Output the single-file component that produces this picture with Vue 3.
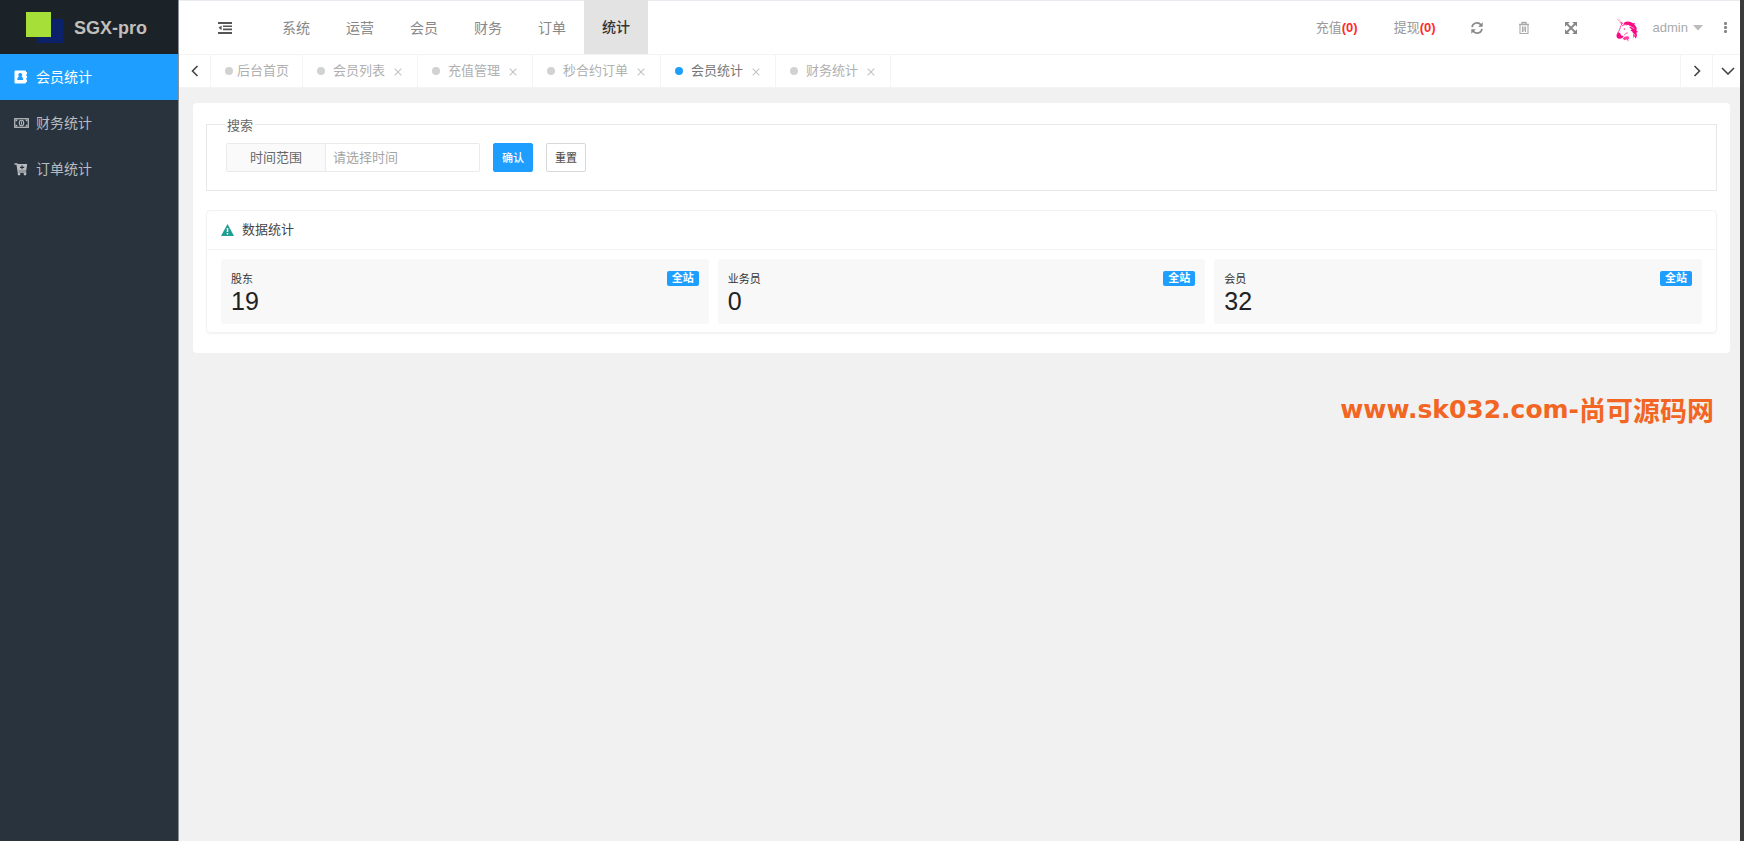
<script setup>
import { ref } from 'vue'

const sideItems = [
  { label: '会员统计', icon: 'user', active: true },
  { label: '财务统计', icon: 'money', active: false },
  { label: '订单统计', icon: 'cart', active: false },
]
const navItems = ['系统', '运营', '会员', '财务', '订单', '统计']
const activeNav = ref('统计')
const tabs = ['后台首页', '会员列表', '充值管理', '秒合约订单', '会员统计', '财务统计']
const activeTab = ref('会员统计')
const stats = [
  { label: '股东', value: 19 },
  { label: '业务员', value: 0 },
  { label: '会员', value: 32 },
]
const range = ref('')
</script>

<template>
  <div class="app">
    <aside class="side">
      <div class="logo">
        <svg class="logo-mark" width="38" height="32" viewBox="0 0 38 32" aria-hidden="true">
          <rect x="12" y="7" width="25" height="24" fill="#0b226b" />
          <rect x="0" y="0" width="25" height="25" fill="#a5df37" />
        </svg>
        <span>SGX-pro</span>
      </div>
      <nav>
        <a v-for="s in sideItems" :key="s.label" href="#" class="side-item" :class="{ active: s.active }">
          <svg v-if="s.icon === 'user'" width="15" height="14" viewBox="0 0 15 14" aria-hidden="true">
            <path fill="currentColor" fill-rule="evenodd" d="M1.500.5h9.500a1 1 0 0 1 1 1v11a1 1 0 0 1-1 1H1.500a1 1 0 0 1-1-1v-11a1 1 0 0 1 1-1zM6.200 3a1.900 1.900 0 0 0-1.200 3.400C3.800 7 3.300 8.300 3.300 10h5.900c0-1.700-.5-3-1.700-3.600A1.900 1.900 0 0 0 6.200 3z" />
            <path fill="currentColor" d="M12 2h1v2.500h-1zM12 5.800h1v2.500h-1zM12 9.500h1V12h-1z" />
          </svg>
          <svg v-else-if="s.icon === 'money'" width="15" height="14" viewBox="0 0 15 14" aria-hidden="true">
            <rect x="0.700" y="2.700" width="13.600" height="8.600" fill="none" stroke="currentColor" stroke-width="1.200" />
            <path fill="currentColor" d="M1.500 3.500h2.200a2.200 2.200 0 0 1-2.200 2zM13.500 3.500h-2.200a2.200 2.200 0 0 0 2.200 2zM1.500 10.500h2.200a2.200 2.200 0 0 0-2.200-2zM13.500 10.500h-2.200a2.200 2.200 0 0 1 2.200-2z" />
            <ellipse cx="7.500" cy="7" rx="2.200" ry="2.800" fill="none" stroke="currentColor" stroke-width="1.100" />
            <path d="M7.500 5.500v3" stroke="currentColor" />
          </svg>
          <svg v-else width="15" height="14" viewBox="0 0 15 14" aria-hidden="true">
            <path d="M.5 2h2.500l1.300 8h7.900" fill="none" stroke="currentColor" stroke-width="1.300" />
            <path fill="currentColor" fill-rule="evenodd" d="M3 2h10.200l-1 6.800H4.300zM7.500 3.300v1.500H6v1.100h1.500v1.400h1.100V5.900h1.600V4.800H8.600V3.300z" />
            <circle cx="5" cy="12" r="1.400" fill="currentColor" />
            <circle cx="11" cy="12" r="1.400" fill="currentColor" />
          </svg>
          <span>{{ s.label }}</span>
        </a>
      </nav>
    </aside>

    <div class="body">
      <header class="header">
        <button class="icon-btn fold" aria-label="收起菜单">
          <svg width="14" height="12" viewBox="0 0 14 12" fill="currentColor" aria-hidden="true">
            <path d="M0 0h14v2H0zM5 3.400h9v1.700H5zM5 6.600h9v1.700H5zM0 10h14v2H0zM3.600 3.400v4.900L.5 5.850z" />
          </svg>
        </button>
        <nav class="nav">
          <a v-for="n in navItems" :key="n" href="#" :class="{ active: n === activeNav }" @click.prevent="activeNav = n">{{ n }}</a>
        </nav>
        <div class="tools">
          <a href="#" class="notice">充值<b>(0)</b></a>
          <a href="#" class="notice">提现<b>(0)</b></a>
          <button class="icon-btn tool" aria-label="刷新">
            <svg width="14" height="14" viewBox="0 0 14 14" aria-hidden="true">
              <path d="M2 6.200A5 5 0 0 1 11 4M12 7.800A5 5 0 0 1 3 10" fill="none" stroke="currentColor" stroke-width="1.600" />
              <path d="M12.700 1.300v4.500H8.200zM1.300 12.700V8.200h4.500z" fill="currentColor" />
            </svg>
          </button>
          <button class="icon-btn tool" aria-label="清除缓存">
            <svg width="12" height="14" viewBox="0 0 12 14" fill="none" stroke="#aaa" aria-hidden="true">
              <path d="M1 3.500h10M4 3V1.500h4V3" stroke-width="1.300" />
              <path d="M2 4v8.500h8V4M4.500 5.500v5.500M6 5.500v5.500M7.500 5.500v5.500" stroke-width="1.100" />
            </svg>
          </button>
          <button class="icon-btn tool" aria-label="全屏">
            <svg width="12" height="12" viewBox="0 0 12 12" aria-hidden="true">
              <path d="M2 2l8 8M10 2l-8 8" stroke="currentColor" stroke-width="1.800" />
              <path d="M0 0h4.800L0 4.800zM12 0v4.800L7.200 0zM0 12V7.200L4.800 12zM12 12H7.200L12 7.200z" fill="currentColor" />
            </svg>
          </button>
          <button class="user">
            <svg class="avatar" width="22" height="24" viewBox="0 0 66 72" aria-hidden="true">
              <path d="M3 2l15 18M7 2l12 14" stroke="#f9a" stroke-width="2" fill="none" />
              <path d="M14 23c-1 9-5 15-9 23M17 22l-2-10 8 7M18 24c4-4 10-5 15-3M35 45c-4-1-7 2-10 7" stroke="#ff3fa0" stroke-width="3" fill="none" />
              <path d="M5 44c6-2 9 2 10 8l8 3c-2 6-9 8-15 7-7-2-9-11-3-18z" fill="#fa0a84" />
              <path d="M24 14c10-7 21-3 27 2l6-1-2 5c6 4 9 11 6 18l5 3-5 3c3 6 2 12-2 18l-3-7-4 5c2-12-3-19-10-24l6-1-9-8 5-1c-5-5-12-7-20-6z" fill="#fa0a84" />
              <path d="M29 24l10 7M36 33l14 10M41 24l14 8M50 44l8 9" stroke="#fff" stroke-width="2" />
              <path d="M20 62c5-8 13-9 20-6l-2 4 4 4-6-1 2 8-7-7-5 3z" fill="#ff3fa0" />
              <circle cx="25" cy="33" r="2" fill="#fa0a84" />
            </svg>
            <span>admin</span>
            <svg width="10" height="6" viewBox="0 0 10 6" aria-hidden="true"><path d="M0 0h10L5 5.500z" fill="#bbb" /></svg>
          </button>
          <button class="icon-btn more" aria-label="更多">
            <svg width="4" height="12" viewBox="0 0 4 12" fill="currentColor" aria-hidden="true">
              <rect width="3" height="3" rx="1" /><rect y="4" width="3" height="3" rx="1" /><rect y="8" width="3" height="3" rx="1" />
            </svg>
          </button>
        </div>
      </header>

      <div class="tabbar">
        <button class="icon-btn arrow left" aria-label="向左">
          <svg width="8" height="12" viewBox="0 0 8 12" aria-hidden="true"><path d="M6.500 1L1.500 6l5 5" fill="none" stroke="currentColor" stroke-width="1.600" /></svg>
        </button>
        <div v-for="(t, i) in tabs" :key="t" class="tab" :class="{ active: t === activeTab, home: i === 0 }">
          <i class="dot"></i>
          <a href="#" @click.prevent="activeTab = t">{{ t }}</a>
          <button v-if="i > 0" class="icon-btn close" aria-label="关闭">
            <svg width="8" height="8" viewBox="0 0 8 8" aria-hidden="true"><path d="M.7.7l6.600 6.600M7.300.7L.7 7.300" stroke="currentColor" stroke-width="1.100" /></svg>
          </button>
        </div>
        <button class="icon-btn arrow right" aria-label="向右">
          <svg width="8" height="12" viewBox="0 0 8 12" aria-hidden="true"><path d="M1.500 1l5 5-5 5" fill="none" stroke="currentColor" stroke-width="1.600" /></svg>
        </button>
        <button class="icon-btn arrow down" aria-label="展开">
          <svg width="14" height="8" viewBox="0 0 14 8" aria-hidden="true"><path d="M1 1l6 6 6-6" fill="none" stroke="currentColor" stroke-width="1.600" /></svg>
        </button>
      </div>

      <main class="main">
        <section class="page">
          <form @submit.prevent>
            <fieldset class="search">
              <legend>搜索</legend>
              <div class="row">
                <div class="field">
                  <label for="range">时间范围</label>
                  <input id="range" v-model="range" type="text" placeholder="请选择时间" />
                </div>
                <button type="submit" class="btn primary">确认</button>
                <button type="reset" class="btn">重置</button>
              </div>
            </fieldset>
          </form>

          <div class="card">
            <h2>
              <svg width="13" height="12" viewBox="0 0 13 12" aria-hidden="true">
                <path d="M6.500 0L13 12H0z" fill="#1c9f92" />
                <path d="M6.500 4v4M6.500 9v1.500" stroke="#fff" stroke-width="1.500" />
              </svg>
              数据统计
            </h2>
            <div class="stats">
              <div v-for="s in stats" :key="s.label" class="stat">
                <div class="stat-head">
                  <span>{{ s.label }}</span>
                  <span class="badge">全站</span>
                </div>
                <p>{{ s.value }}</p>
              </div>
            </div>
          </div>
        </section>
      </main>
    </div>

    <div class="watermark">www.sk032.com-<span>尚可源码网</span></div>
  </div>
</template>

<style>
body {
  margin: 0;
}
</style>

<style scoped>
* {
  box-sizing: border-box;
}
.app {
  position: relative;
  display: flex;
  min-height: 100vh;
  border-right: 4px solid #3b3b3b;
  background: #f1f1f1;
  color: #666;
  font: 13px/20px "Liberation Sans", "Noto Sans CJK SC", sans-serif;
}
a {
  color: inherit;
  text-decoration: none;
}
button {
  padding: 0;
  border: 0;
  background: none;
  color: inherit;
  font: inherit;
  cursor: pointer;
}
.icon-btn {
  display: flex;
  align-items: center;
  justify-content: center;
}
.side {
  flex: none;
  width: 179px;
  border-right: 1px solid #8b9198;
  background: #28333e;
}
.logo {
  display: flex;
  align-items: center;
  gap: 10px;
  height: 54px;
  padding: 2px 0 0 26px;
  background: #1b2228;
  color: #c2bfba;
  font-size: 18px;
  font-weight: bold;
}
.side-item {
  display: flex;
  align-items: center;
  gap: 7px;
  height: 46px;
  padding-left: 14px;
  color: #b9bbbe;
  font-size: 14px;
}
.side-item.active {
  background: #1e9fff;
  color: #fff;
}
.body {
  flex: 1;
  min-width: 0;
}
.header {
  display: flex;
  height: 55px;
  border-top: 1px solid #e8ecf1;
  border-bottom: 1px solid #f4f4f4;
  background: #fff;
}
.fold {
  width: 85px;
  padding-left: 6px;
  color: #555;
}
.nav {
  display: flex;
}
.nav a {
  display: flex;
  align-items: center;
  padding: 0 18px;
  font-size: 14px;
  color: #888;
}
.nav a.active {
  margin-top: -1px;
  background: #e3e3e3;
  color: #333;
  font-weight: 500;
}
.tools {
  display: flex;
  align-items: center;
  margin-left: auto;
  color: #888;
}
.notice {
  margin-right: 36px;
  color: #999;
}
.notice b {
  color: #ff2a2a;
}
.tool {
  width: 47px;
  height: 53px;
}
.notice + .tool {
  margin-left: -18px;
}
.user {
  display: flex;
  align-items: center;
  gap: 5px;
  margin-left: 21px;
  color: #aaa;
}
.avatar {
  margin: 5px 10px 0 0;
}
.more {
  width: 37px;
  padding-left: 8px;
}
.tabbar {
  display: flex;
  height: 33px;
  border-bottom: 1px solid #f4f4f4;
  background: #fff;
}
.arrow {
  width: 32px;
  color: #444;
}
.arrow.left {
  border-right: 1px solid #f4f4f4;
}
.arrow.right {
  width: 32px;
  margin-left: auto;
  border-left: 1px solid #f4f4f4;
}
.arrow.down {
  width: 28px;
  padding-left: 2px;
  border-left: 1px solid #f4f4f4;
}
.tab {
  display: flex;
  align-items: center;
  padding: 0 15px 0 14px;
  border-right: 1px solid #f4f4f4;
  color: #b0b0b0;
}
.tab.home {
  padding: 0 13px 0 14px;
}
.dot {
  width: 8px;
  height: 8px;
  margin-right: 8px;
  border-radius: 50%;
  background: #d2d2d2;
}
.home .dot {
  margin-right: 4px;
}
.tab.active {
  color: #777;
}
.active .dot {
  background: #1e9fff;
}
.close {
  margin: 2px 0 0 9px;
  color: #c4c4c4;
}
.main {
  padding: 15px 10px 20px 14px;
}
.page {
  padding: 11px 13px 20px;
  border-radius: 4px;
  background: #fff;
}
.search {
  min-width: 0;
  margin: 0 0 19px;
  padding: 9px 19px 18px;
  border: 1px solid #e8e8e8;
}
.search legend {
  margin-left: -1px;
  padding: 4px 2px 0;
  line-height: 16px;
}
.row {
  display: flex;
  gap: 13px;
}
.field {
  display: flex;
  height: 29px;
  border: 1px solid #eaeaea;
  border-radius: 2px;
}
.field label {
  width: 99px;
  border-right: 1px solid #eaeaea;
  background: #fafafa;
  line-height: 27px;
  text-align: center;
}
.field input {
  width: 153px;
  padding: 0 7px;
  border: 0;
  outline: 0;
  background: none;
  color: #666;
  font: inherit;
}
.field input::placeholder {
  color: #a5a5a5;
  opacity: 1;
}
.btn {
  height: 29px;
  padding: 0 8px;
  border: 1px solid #d8d8d8;
  border-radius: 2px;
  background: #fff;
  color: #555;
  font-size: 11px;
  font-weight: 500;
}
.btn.primary {
  border-color: #1e9fff;
  background: #1e9fff;
  color: #fff;
}
.card {
  border: 1px solid #f2f2f2;
  border-radius: 4px;
  box-shadow: 0 1px 2px rgba(0, 0, 0, 0.05);
}
.card h2 {
  display: flex;
  align-items: center;
  gap: 8px;
  height: 39px;
  margin: 0;
  padding: 0 14px;
  border-bottom: 1px solid #f4f4f4;
  font-size: 13px;
  font-weight: normal;
  color: #444;
}
.stats {
  display: grid;
  grid-template-columns: repeat(3, 1fr);
  gap: 9px;
  padding: 9px 14px 8px;
}
.stat {
  padding: 12px 10px 10px;
  border-radius: 3px;
  background: #f8f8f8;
}
.stat-head {
  display: flex;
  justify-content: space-between;
  font-size: 11px;
  line-height: 17px;
  color: #333;
}
.badge {
  height: 15px;
  padding: 0 5px;
  border-radius: 2px;
  background: #1e9fff;
  color: #fff;
  font-weight: bold;
  line-height: 14px;
}
.stat p {
  margin: 0;
  font-size: 25px;
  line-height: 26px;
  color: #222;
}
.watermark {
  position: absolute;
  top: 392px;
  right: 26px;
  display: flex;
  align-items: center;
  color: #f26522;
  font: bold 25px/36px "DejaVu Sans", sans-serif;
}
.watermark span {
  font: bold 27px/34px "Noto Sans CJK SC", sans-serif;
}
</style>
